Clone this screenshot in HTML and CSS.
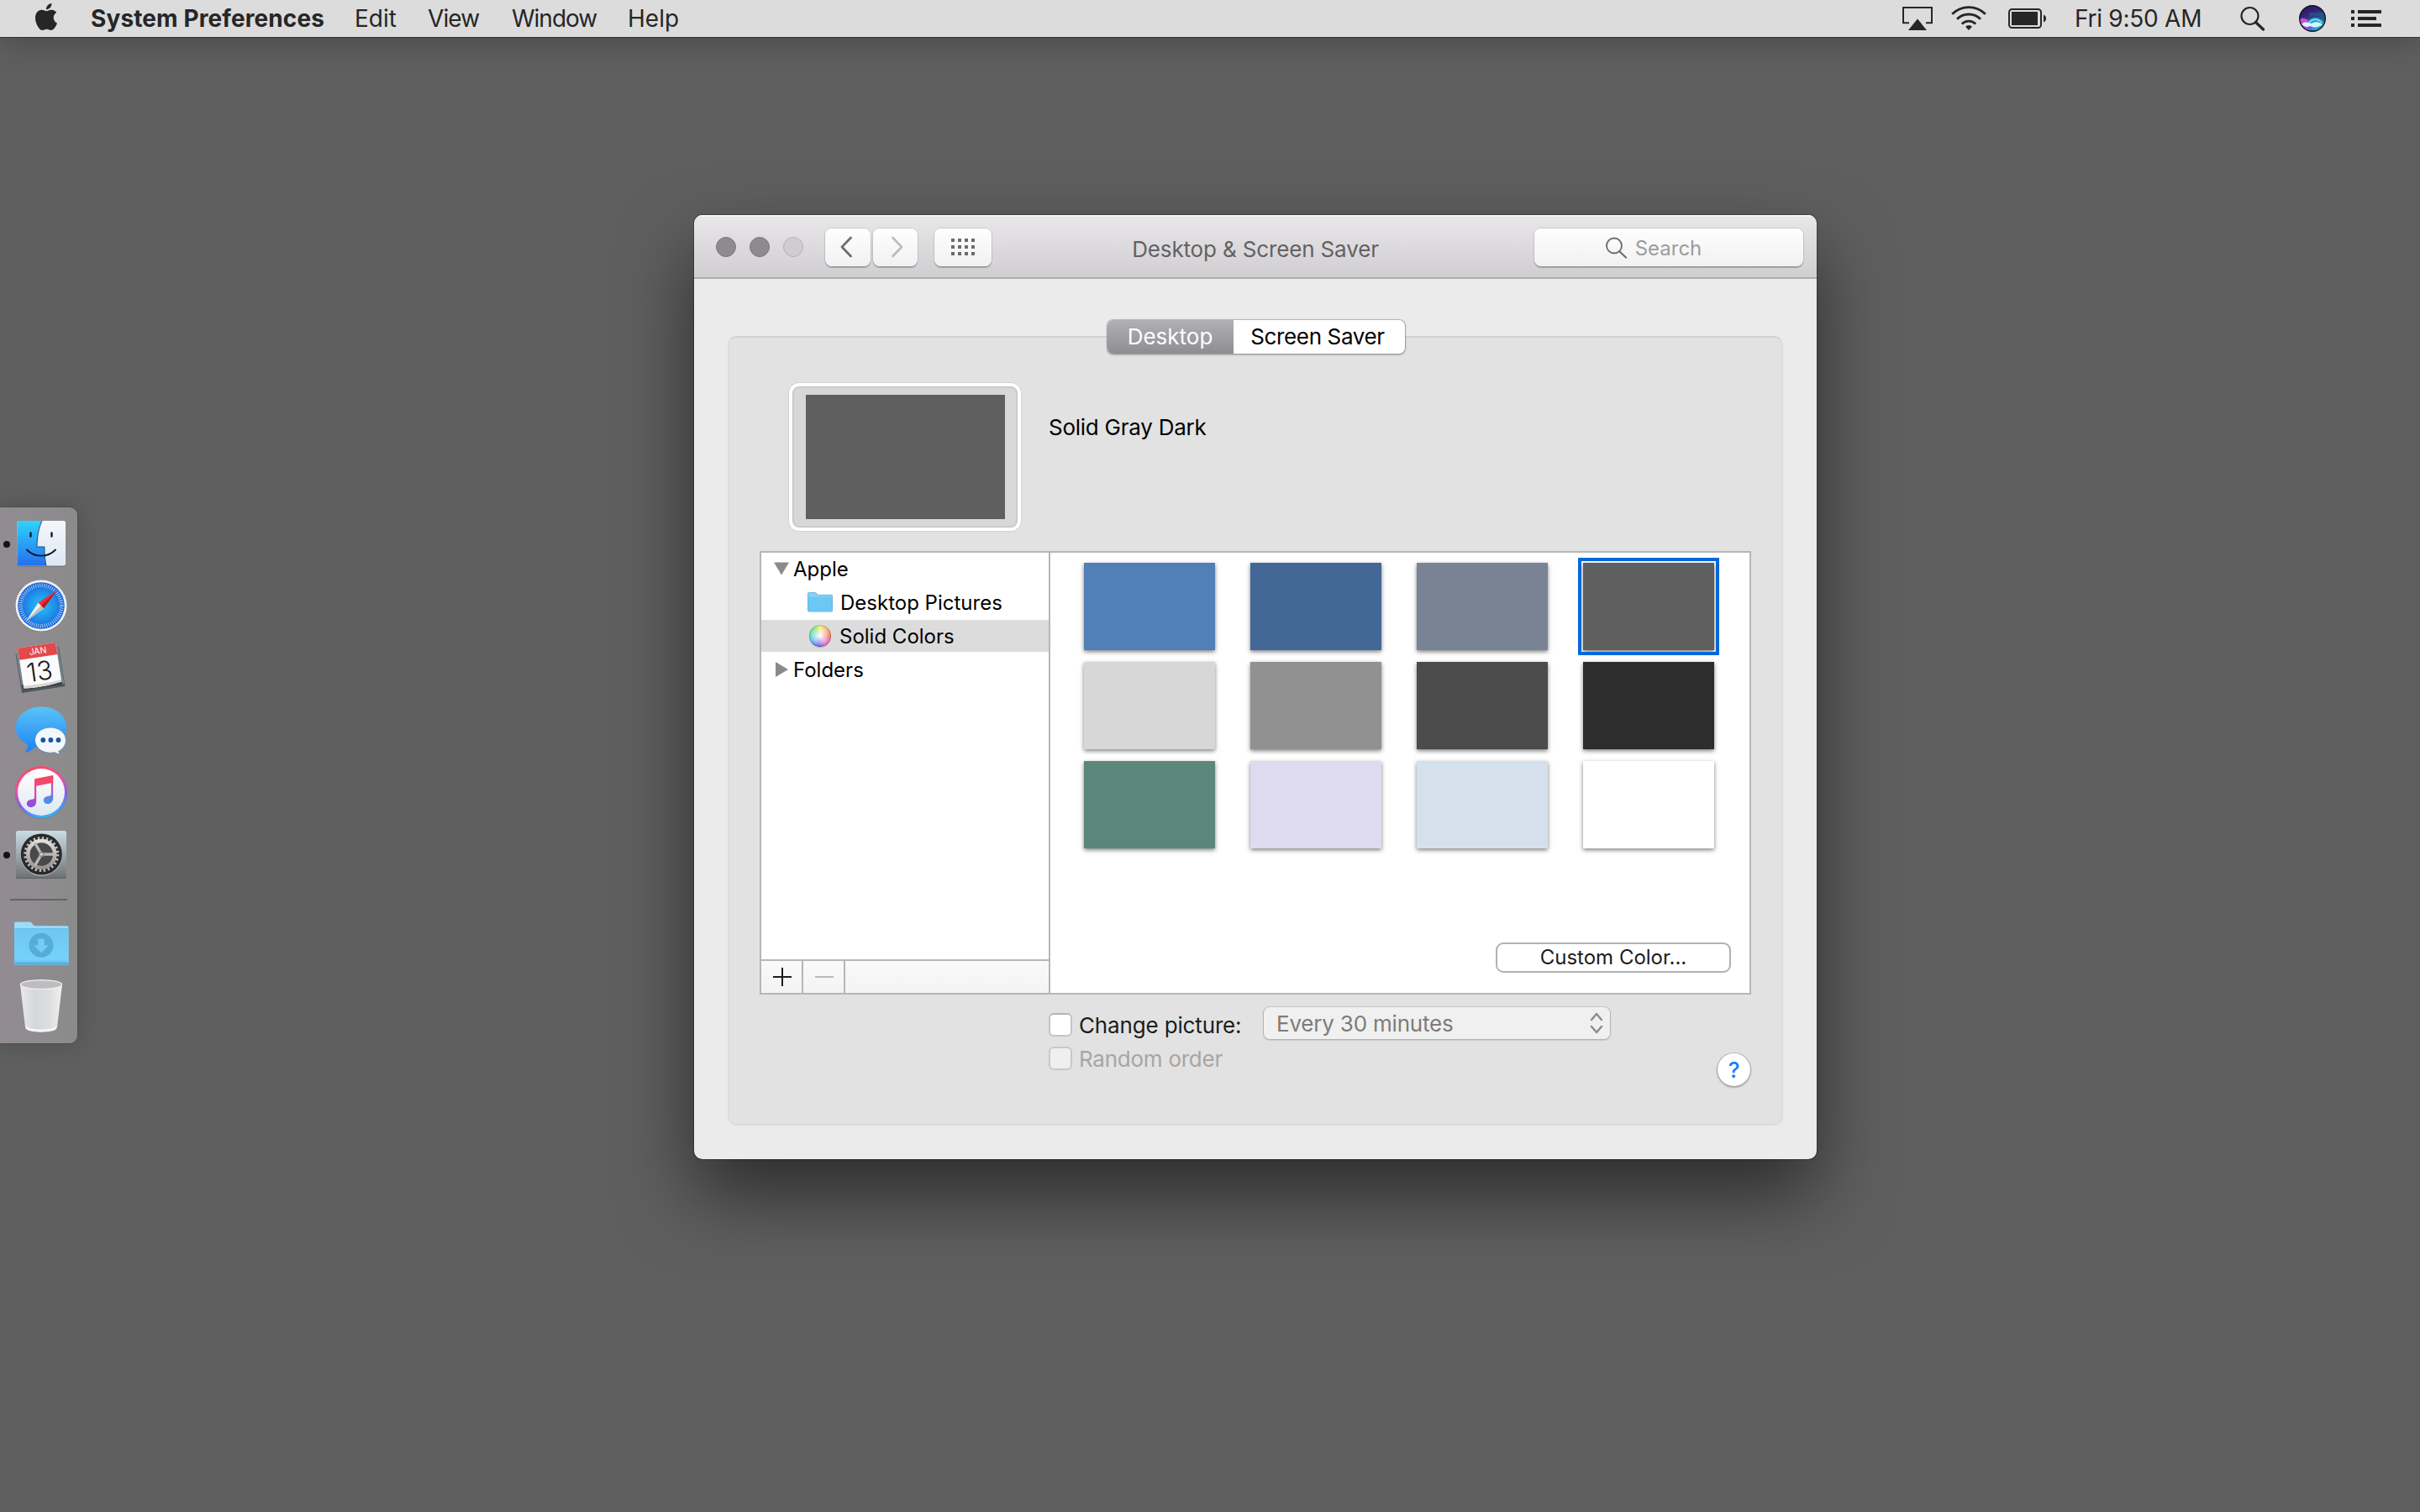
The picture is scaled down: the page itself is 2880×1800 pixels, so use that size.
FILE: index.html
```html
<!DOCTYPE html>
<html lang="en">
<head>
<meta charset="utf-8">
<title>Desktop &amp; Screen Saver</title>
<link rel="stylesheet" href="styles.css">
</head>
<body>
<header class="menubar">
  <svg class="apple" viewBox="0 0 24 24"><path d="M12.152 6.896c-.948 0-2.415-1.078-3.96-1.04-2.04.027-3.91 1.183-4.961 3.014-2.117 3.675-.546 9.103 1.519 12.09 1.013 1.454 2.208 3.09 3.792 3.039 1.52-.065 2.09-.987 3.935-.987 1.831 0 2.35.987 3.96.948 1.637-.026 2.676-1.48 3.676-2.948 1.156-1.688 1.636-3.325 1.662-3.415-.039-.013-3.182-1.221-3.22-4.857-.026-3.04 2.48-4.494 2.597-4.559-1.429-2.09-3.623-2.324-4.39-2.376-2-.156-3.675 1.09-4.61 1.09zM15.53 3.83c.843-1.012 1.4-2.427 1.245-3.83-1.207.052-2.662.805-3.532 1.818-.78.896-1.454 2.338-1.273 3.714 1.338.104 2.715-.688 3.559-1.701"/></svg>
  <nav class="menus">
    <span class="menu menu-app">System Preferences</span>
    <span class="menu menu-edit">Edit</span>
    <span class="menu menu-view">View</span>
    <span class="menu menu-window">Window</span>
    <span class="menu">Help</span>
  </nav>
  <div class="status">
    <svg class="airplay" width="36" height="28" viewBox="0 0 36 28"><path d="M8 19.200H1V1h34v18.200h-7" fill="none" stroke="#262626" stroke-width="2"/><path d="M18 14.500L29 28H7z" fill="#262626"/></svg>
    <svg class="wifi" width="42" height="30" viewBox="0 0 42 30"><g fill="none" stroke="#262626" stroke-width="2.800"><path d="M1.200 9.800a28 28 0 0 1 39.600 0"/><path d="M7 15.800a19.800 19.800 0 0 1 28 0"/><path d="M12.800 21.600a11.600 11.600 0 0 1 16.400 0"/></g><path d="M21 29l-4-4.200a5.600 5.600 0 0 1 8 0z" fill="#262626"/></svg>
    <svg class="battery" width="46" height="24" viewBox="0 0 46 24"><rect x="1" y="1" width="38" height="22" rx="3.500" fill="none" stroke="#262626" stroke-width="2"/><rect x="4" y="4" width="31" height="16" fill="#262626"/><path d="M42 7.500c4 1 4 8 0 9z" fill="#262626"/></svg>
    <span class="clock">Fri 9:50 AM</span>
    <svg class="spotlight" width="30" height="30" viewBox="0 0 30 30"><circle cx="11.500" cy="12" r="10" fill="none" stroke="#262626" stroke-width="2.200"/><path d="M18.500 19.500l9 8.500" stroke="#262626" stroke-width="3.200" stroke-linecap="round"/></svg>
    <svg class="siri" width="32" height="32" viewBox="0 0 32 32">
      <defs>
        <linearGradient id="siriSky" x1="0" y1="0" x2=".4" y2="1"><stop offset="0" stop-color="#2b1150"/><stop offset=".45" stop-color="#3a2580"/><stop offset="1" stop-color="#1d7fa8"/></linearGradient>
        <clipPath id="siriClip"><circle cx="16" cy="16" r="14.500"/></clipPath>
      </defs>
      <circle cx="16" cy="16" r="16" fill="#0c1524"/>
      <g clip-path="url(#siriClip)">
        <rect width="32" height="32" fill="url(#siriSky)"/>
        <path d="M12 15c7-5 15-1 20 6v-12h-20z" fill="#1b5f80" opacity=".7"/>
        <path d="M0 17c5-2.500 9-1 13 3l3 10H0z" fill="#c84fd6"/>
        <path d="M10 20c6-8 15-6 20 1l-4 9H12z" fill="#27a6c8" opacity=".9"/>
        <path d="M12 21c4-5 11-5 15 0" fill="none" stroke="#7fe6f5" stroke-width="1.300"/>
        <path d="M3 23c4-4 8-2 12-1 4-3 9-2 13 1-4 3-8 4-12 3-5 1-9 0-13-3z" fill="#d9f4ff"/>
        <path d="M9 27c2-2 5-2 7-1l-1 4h-4z" fill="#6a5be8"/>
      </g>
    </svg>
    <svg class="notif" width="36" height="20" viewBox="0 0 36 20" fill="#262626"><path d="M0 0h4v4H0zM8 0h28v4H8zM0 8h4v4H0zM8 8h22v4H8zM0 16h4v4H0zM8 16h28v4H8z"/></svg>
  </div>
</header>

<main class="desktop">
  <aside class="dock">
    <svg class="dock-icon" viewBox="0 0 92 74">
      <defs>
        <linearGradient id="finderL" x1="0" y1="0" x2="0" y2="1"><stop offset="0" stop-color="#2fd3fb"/><stop offset="1" stop-color="#2370ee"/></linearGradient>
        <linearGradient id="finderR" x1="0" y1="0" x2="0" y2="1"><stop offset="0" stop-color="#f6f7f9"/><stop offset="1" stop-color="#dce8f6"/></linearGradient>
      </defs>
      <circle cx="8" cy="38" r="4" fill="#151115"/>
      <rect x="20.500" y="10.500" width="57.500" height="54" rx="2" fill="#6d6d72"/>
      <rect x="20.500" y="10" width="57.500" height="53.500" rx="2" fill="url(#finderR)"/>
      <path d="M22.500 10H50c-4 9-5.800 18-6 31h9c-.3 8 .4 15 2 22.500H22.500a2 2 0 0 1-2-2V12a2 2 0 0 1 2-2z" fill="url(#finderL)"/>
      <path d="M50 10c-4 9-5.800 18-6 31h9c-.3 8 .4 15 2 22.500" fill="none" stroke="#1c4f86" stroke-width="1"/>
      <path d="M32 44.500c9 9.500 25 9.500 34 0" fill="none" stroke="#10182a" stroke-width="1.900" stroke-linecap="round"/>
      <path d="M36.500 24.500v4M61.500 24.500v4" stroke="#10182a" stroke-width="2.400" stroke-linecap="round"/>
    </svg>
    <svg class="dock-icon" viewBox="0 0 92 74">
      <defs><radialGradient id="safari"><stop offset="0" stop-color="#27c4f2"/><stop offset=".55" stop-color="#1f93ea"/><stop offset="1" stop-color="#1c62dd"/></radialGradient></defs>
      <circle cx="49" cy="37.800" r="30.500" fill="#707074"/>
      <circle cx="49" cy="37" r="30.500" fill="#f1f2f4"/>
      <circle cx="49" cy="37" r="27.800" fill="url(#safari)"/>
      <circle cx="49" cy="37" r="24.300" fill="none" stroke="#d5ecfb" stroke-width="4.600" stroke-dasharray=".9 1.645" opacity=".8"/>
      <path d="M67.500 19L45.500 33.500l6.500 7z" fill="#ee2f35"/><path d="M67.500 19L48.800 37l3.200 3.500z" fill="#bb1b22"/>
      <path d="M31 55.500L45.500 33.500l6.500 7z" fill="#f3f3f3"/><path d="M31 55.500L48.800 37l3.200 3.500z" fill="#b9bcc0"/>
    </svg>
    <svg class="dock-icon" viewBox="0 0 92 74">
      <path d="M18.500 20.500L26 67l51.500-8L70 12z" fill="#4f585d"/>
      <path d="M19 19.500L26.500 63.500l50-8L69 11z" fill="#77858c"/>
      <path d="M25.500 57.500l2 6.500 46.500-7-.8-5z" fill="#3d4446"/>
      <path d="M21 13.700L66 7l7.300 46.500c-14 4.500-30 7.500-45 8z" fill="#fbfbfb"/>
      <path d="M28.300 61.500c15-.5 31-3.500 45-8l-.4-2.500c-15 4-30 6.500-45 7.500z" fill="#d7d6cf"/>
      <path d="M21 13.700L66 7l2.200 14-45 6.800z" fill="#e4484a"/>
      <text class="cal-month" transform="translate(45.500 20.500) rotate(-8)">JAN</text>
      <text class="cal-day" transform="translate(48.500 52) rotate(-8)">13</text>
    </svg>
    <svg class="dock-icon" viewBox="0 0 92 74">
      <defs><linearGradient id="msg" x1="0" y1="0" x2="0" y2="1"><stop offset="0" stop-color="#5cc3f8"/><stop offset="1" stop-color="#1b83f5"/></linearGradient></defs>
      <path d="M49 9.200c16.700 0 30.300 11 30.300 24.700S65.700 58.500 49 58.500c-3 0-5.500-.2-8-.8-3 3.300-7 6-11.500 6 2-2.500 3.700-6 3.800-9C24.500 50.500 18.700 43 18.700 34 18.700 20.200 32.300 9.200 49 9.200z" fill="url(#msg)"/>
      <path d="M60 34c10.400 0 18.400 6.700 18.400 15.200 0 5.500-3.300 10.300-8.600 13 .2 1.400.8 2.600 1.700 3.600-2.600-.2-4.600-1-6.300-2.200-1.700.4-3.400.6-5.200.6-10.400 0-18.400-6.700-18.400-15.100S49.600 34 60 34z" fill="#f2f7fd" stroke="#3c7fc0" stroke-width=".6"/>
      <circle cx="51.300" cy="49" r="2.900" fill="#1755a0"/><circle cx="60.400" cy="49" r="2.900" fill="#1755a0"/><circle cx="69.500" cy="49" r="2.900" fill="#1755a0"/>
    </svg>
    <svg class="dock-icon" viewBox="0 0 92 74">
      <defs>
        <linearGradient id="ring" x1=".3" y1="0" x2=".6" y2="1"><stop offset="0" stop-color="#fb4a5c"/><stop offset=".35" stop-color="#f0509c"/><stop offset=".65" stop-color="#8a5cf5"/><stop offset="1" stop-color="#2cb9f5"/></linearGradient>
        <linearGradient id="noteL" gradientUnits="userSpaceOnUse" x1="0" y1="17" x2="0" y2="56"><stop offset="0" stop-color="#fb4350"/><stop offset=".35" stop-color="#f0488e"/><stop offset="1" stop-color="#7a52f4"/></linearGradient>
        <linearGradient id="noteR" gradientUnits="userSpaceOnUse" x1="0" y1="17" x2="0" y2="52"><stop offset="0" stop-color="#f84458"/><stop offset=".45" stop-color="#b05cc8"/><stop offset="1" stop-color="#2f9df4"/></linearGradient>
        <linearGradient id="face" x1="0" y1="0" x2="0" y2="1"><stop offset="0" stop-color="#fff"/><stop offset="1" stop-color="#dfe8f0"/></linearGradient>
      </defs>
      <circle cx="49" cy="37.500" r="31" fill="#5f6d86"/>
      <circle cx="49" cy="37" r="31" fill="url(#ring)"/>
      <circle cx="49" cy="37" r="28" fill="url(#face)"/>
      <path d="M63.200 17v27c0 4.500-3 7-6.500 7-3 0-4.900-1.800-4.900-4.300 0-3 2.500-4.700 5.500-5 2.800-.4 3.600-.8 3.600-3V20z" fill="url(#noteR)"/>
      <path d="M63.200 17v8.800l-20 4V48c0 4.500-3 7-6.500 7-3 0-4.900-1.800-4.900-4.300 0-3 2.500-4.700 5.500-5 2.800-.4 3.700-.8 3.700-3V22.300c0-.9.400-1.200 1.200-1.400z" fill="url(#noteL)"/>
    </svg>
    <svg class="dock-icon" viewBox="0 0 92 74">
      <defs>
        <linearGradient id="plate" x1="0" y1="0" x2="0" y2="1"><stop offset="0" stop-color="#cbdde4"/><stop offset=".5" stop-color="#9fa9ad"/><stop offset="1" stop-color="#6f7272"/></linearGradient>
        <linearGradient id="metal" x1="0" y1="0" x2="0" y2="1"><stop offset="0" stop-color="#e0dfdc"/><stop offset="1" stop-color="#96938e"/></linearGradient>
      </defs>
      <circle cx="8" cy="38" r="4" fill="#151115"/>
      <rect x="19" y="9.500" width="60" height="56.500" rx="2.500" fill="#5d5f60"/>
      <rect x="19" y="9" width="60" height="56" rx="2.500" fill="url(#plate)"/>
      <circle cx="49.300" cy="37.600" r="25" fill="#c2d2de"/>
      <circle cx="49.300" cy="37" r="24.600" fill="#2a2a2b"/>
      <circle cx="49.300" cy="37" r="14" fill="#48494a"/>
      <circle cx="49.300" cy="37" r="19.300" fill="none" stroke="#bdbbb8" stroke-width="3.600" stroke-dasharray="2.400 2.652"/>
      <circle cx="49.300" cy="37" r="16" fill="none" stroke="url(#metal)" stroke-width="4.600"/>
      <path d="M49.300 37H65M49.300 37L41.400 23.400M49.300 37L41.400 50.600" stroke="#b9b7b4" stroke-width="3.400"/>
      <circle cx="49.300" cy="37" r="3.200" fill="#8f8e8c"/><circle cx="49.300" cy="37" r="1.600" fill="#dddcda"/>
    </svg>
    <div class="dock-divider"></div>
    <svg class="dock-icon" viewBox="0 0 92 74">
      <defs><linearGradient id="folder" x1="0" y1="0" x2="0" y2="1"><stop offset="0" stop-color="#6fc8f3"/><stop offset=".85" stop-color="#76d0fa"/><stop offset="1" stop-color="#5cb4e4"/></linearGradient></defs>
      <path d="M17 62.500V13.500a2 2 0 0 1 2-2h16.500c3 0 3.200 4.800 6.500 4.800h37.500a2 2 0 0 1 2 2V62.500z" fill="#9adcfa"/>
      <path d="M17 20h64.500v41.500a1 1 0 0 1-1 1H18a1 1 0 0 1-1-1z" fill="url(#folder)"/>
      <path d="M17.500 19.500h63.500" stroke="#5bb5e0" stroke-width=".8"/><path d="M17 61h64.500" stroke="#4a9fcc" stroke-width="1"/>
      <circle cx="49" cy="39.300" r="14.500" fill="#54aed8"/>
      <path d="M45.300 31.500h7.400v7.800h5L49 48.500l-8.700-9.200h5z" fill="#74ccf6"/>
    </svg>
    <svg class="dock-icon" viewBox="0 0 92 74">
      <defs><linearGradient id="bin" x1="0" y1="0" x2="1" y2="0"><stop offset="0" stop-color="#e9eaec"/><stop offset=".35" stop-color="#d6d7d9"/><stop offset=".7" stop-color="#dddee0"/><stop offset="1" stop-color="#f0f0f1"/></linearGradient></defs>
      <path d="M24 12l6 51c1 7 37 7 38 0l6-51z" fill="url(#bin)"/>
      <path d="M30.300 61c3 6 34.500 6 37.400 0l-.7 3.500c-2 5.500-34 5.500-36 0z" fill="#f6f6f7"/>
      <ellipse cx="49" cy="12" rx="24.600" ry="5.400" fill="#bdbcbe" stroke="#f0f0f1" stroke-width="1.200"/>
    </svg>
  </aside>

  <section class="window">
    <div class="titlebar">
      <div class="controls">
        <i class="light"></i><i class="light"></i><i class="light light-off"></i>
        <button class="tool back"><svg width="16" height="32" viewBox="0 0 16 32"><path d="M13.500 5L3 16l10.500 11" fill="none" stroke="#6e6e6e" stroke-width="2.800" stroke-linecap="round" stroke-linejoin="round"/></svg></button>
        <button class="tool forward"><svg width="16" height="32" viewBox="0 0 16 32"><path d="M2.500 5L13 16 2.500 27" fill="none" stroke="#bdbdbd" stroke-width="2.800" stroke-linecap="round" stroke-linejoin="round"/></svg></button>
        <button class="tool all"><svg width="28" height="20" viewBox="0 0 28 20" fill="#6b6b6b"><path d="M0 0h4v4H0zM8 0h4v4H8zM16 0h4v4h-4zM24 0h4v4h-4zM0 8h4v4H0zM8 8h4v4H8zM16 8h4v4h-4zM24 8h4v4h-4zM0 16h4v4H0zM8 16h4v4H8zM16 16h4v4h-4zM24 16h4v4h-4z"/></svg></button>
      </div>
      <h1 class="title">Desktop &amp; Screen Saver</h1>
      <div class="search">
        <svg width="26" height="26" viewBox="0 0 26 26"><circle cx="10" cy="10.500" r="9" fill="none" stroke="#6d6d6d" stroke-width="1.900"/><path d="M16.500 17.500l7.500 7" stroke="#6d6d6d" stroke-width="2.200" stroke-linecap="round"/></svg>
        <span>Search</span>
      </div>
    </div>

    <div class="content">
      <div class="tabs"><span class="tab tab-on">Desktop</span><span class="tab tab-saver">Screen Saver</span></div>
      <div class="panel">
        <div class="current">
          <div class="well"><div class="well-picture"></div></div>
          <p class="current-name">Solid Gray Dark</p>
        </div>

        <div class="browser">
          <div class="sources">
            <ul class="tree">
              <li class="row"><svg class="arrow" width="18" height="18" viewBox="0 0 18 18"><path d="M0 1.500h18L9 16.500z" fill="#8a8a8a"/></svg><span class="row-label">Apple</span></li>
              <li class="row row-child"><svg class="row-icon" width="30" height="26" viewBox="0 0 30 26"><path d="M.5 23V2.500a1 1 0 0 1 1-1h8c1.500 0 1.500 2.800 3 2.800h16a1 1 0 0 1 1 1V23a1 1 0 0 1-1 1h-27a1 1 0 0 1-1-1z" fill="#86d1f5" stroke="#55a9d6" stroke-width=".8"/><path d="M1 6.500h28V23H1z" fill="#6bc7f4"/></svg><span class="row-label">Desktop Pictures</span></li>
              <li class="row row-child row-selected"><i class="row-icon wheel"></i><span class="row-label">Solid Colors</span></li>
              <li class="row"><svg class="arrow" width="18" height="18" viewBox="0 0 18 18"><path d="M2 0l15 9-15 9z" fill="#8a8a8a"/></svg><span class="row-label">Folders</span></li>
            </ul>
            <div class="source-actions">
              <span class="action"><svg width="22" height="22" viewBox="0 0 22 22"><path d="M11 0v22M0 11h22" stroke="#1c1c1c" stroke-width="2"/></svg></span>
              <span class="action"><svg width="22" height="22" viewBox="0 0 22 22"><path d="M0 11h22" stroke="#b9b9b9" stroke-width="2"/></svg></span>
            </div>
          </div>
          <div class="colors">
            <div class="swatches">
              <i class="swatch blue"></i><i class="swatch deep-blue"></i><i class="swatch slate"></i><i class="swatch gray-dark swatch-selected"></i>
              <i class="swatch gray-light"></i><i class="swatch gray"></i><i class="swatch charcoal"></i><i class="swatch near-black"></i>
              <i class="swatch green"></i><i class="swatch lavender"></i><i class="swatch ice"></i><i class="swatch white"></i>
            </div>
            <button class="custom">Custom Color...</button>
          </div>
        </div>

        <div class="options">
          <div class="option-list">
            <div class="option">
              <i class="check"></i><span class="option-label">Change picture:</span>
              <div class="popup"><span>Every 30 minutes</span><svg width="16" height="26" viewBox="0 0 16 26"><path d="M2 9l6-7 6 7M2 17l6 7 6-7" fill="none" stroke="#8a8a8a" stroke-width="2.400" stroke-linecap="round" stroke-linejoin="round"/></svg></div>
            </div>
            <div class="option option-off"><i class="check"></i><span class="option-label">Random order</span></div>
          </div>
          <button class="help">?</button>
        </div>
      </div>
    </div>
  </section>
</main>
</body>
</html>
```
FILE: styles.css
```css
* { box-sizing: border-box; margin: 0; padding: 0; }
body {
  width: 2880px;
  height: 1800px;
  overflow: hidden;
  background: #5f5f5f;
  font-family: Inter, "Liberation Sans", sans-serif;
  font-size: 26px;
  color: #000;
}
svg { display: block; flex: none; }
button { font: inherit; border: 0; }

/* Menu bar */
.menubar {
  position: relative;
  z-index: 2;
  display: flex;
  align-items: center;
  height: 44px;
  padding: 0 46px 0 39px;
  background: #dcdcdc;
  box-shadow: 0 1px 0 rgba(0, 0, 0, .35), 0 0 40px rgba(0, 0, 0, .32);
  color: #262626;
  font-size: 28px;
  line-height: 44px;
  white-space: nowrap;
}
.apple { width: 32px; height: 32px; margin: -4px 37px 0 0; fill: #262626; }
.menus { display: flex; }
.menu-app { width: 314px; font-weight: 700; letter-spacing: .1px; }
.menu-edit { width: 87px; }
.menu-view { width: 100px; letter-spacing: -.9px; }
.menu-window { width: 138px; letter-spacing: -1px; }
.status { display: flex; align-items: center; margin-left: auto; }
.wifi { margin: -1px 26px 0 22px; }
.clock { width: 197px; margin-left: 33px; letter-spacing: -.25px; }
.spotlight { width: 30px; margin-right: 40px; }
.siri { margin-right: 30px; }

/* Dock */
.desktop { position: relative; height: 1756px; }
.dock {
  position: absolute;
  left: 0;
  top: 560px;
  width: 92px;
  height: 638px;
  padding-top: 6px;
  border-radius: 0 9px 9px 0;
  background: linear-gradient(90deg, #928c92, #8b8b8b);
  box-shadow: 0 0 0 1px rgba(0, 0, 0, .12), 0 0 30px rgba(0, 0, 0, .18);
}
.dock-icon { width: 92px; height: 74px; }
.dock-divider { width: 68px; height: 2px; margin: 16px 0 14px 12px; background: #656367; }
.cal-month { font-size: 10.500px; fill: #fff; text-anchor: middle; }
.cal-day { font-size: 31px; font-weight: 300; fill: #1b1b1b; text-anchor: middle; }

/* Window */
.window {
  position: absolute;
  left: 826px;
  top: 212px;
  width: 1336px;
  height: 1124px;
  border-radius: 10px;
  overflow: hidden;
  background: #ebebeb;
  box-shadow: 0 0 0 1px rgba(0, 0, 0, .3), 0 42px 90px rgba(0, 0, 0, .54);
}
.titlebar {
  display: grid;
  grid-template-columns: 1fr auto 1fr;
  align-items: center;
  height: 76px;
  padding: 2px 16px 0;
  border-bottom: 2px solid #afadb0;
  background: linear-gradient(#e9e7ea, #d1ced2);
  box-shadow: inset 0 2px 0 #f5f4f6;
}
.controls { display: flex; align-items: center; padding-left: 10px; }
.light { width: 24px; height: 24px; margin-right: 16px; border: 1.500px solid #79787c; border-radius: 50%; background: #8d8b90; }
.light-off { margin-right: 26px; border-color: #b4b2b5; background: #cfcdcf; }
.tool, .search {
  display: flex;
  align-items: center;
  justify-content: center;
  height: 45px;
  border-radius: 8px;
  background: linear-gradient(#fefefe, #f1f1f1);
  box-shadow: 0 0 0 1px rgba(0, 0, 0, .1), 0 2px 1px rgba(0, 0, 0, .22);
}
.back { width: 54px; margin-right: 3px; padding-right: 4px; }
.forward { width: 53px; margin-right: 20px; padding-left: 4px; }
.all { width: 68px; }
.title { padding-top: 5px; font-size: 26px; font-weight: 400; color: #626262; letter-spacing: -.15px; }
.search { justify-self: end; gap: 9px; width: 320px; padding-right: 36px; color: #9c9c9c; font-size: 24px; }
.search svg { margin-top: 2px; }
.search span { padding-top: 2px; }
.content { display: flex; flex-direction: column; align-items: center; padding: 49px 40px 0; }
.tabs {
  display: flex;
  z-index: 1;
  height: 40px;
  margin: 0 0 -21px 1px;
  border-radius: 7px;
  background: #fff;
  box-shadow: 0 0 0 1px rgba(0, 0, 0, .18), 0 1px 2px 1px rgba(0, 0, 0, .18);
  line-height: 40px;
}
.tab { width: 204px; text-align: center; }
.tab-on { width: 150px; border-radius: 7px 0 0 7px; background: linear-gradient(#b1b0b5, #8e8d92); color: #fff; }
.tab-saver { padding-right: 3px; letter-spacing: -.35px; }
.panel {
  width: 1256px;
  height: 940px;
  padding: 54px 36px 0;
  border: 2px solid #dcdcdc;
  border-top-color: #d3d3d3;
  border-radius: 10px;
  background: #e2e2e2;
}

/* Current picture */
.current { display: flex; margin-left: 35px; }
.well {
  width: 276px;
  height: 176px;
  padding: 10px 15px 10px 16px;
  border: 4px solid #fff;
  border-radius: 12px;
  background: #d8d8d8;
  box-shadow: 0 0 0 1px #d3d3d3, inset 0 0 2px 1px #bcbcbc;
}
.well-picture { height: 148px; background: #5f5f5f; }
.current-name { margin: 35px 0 0 33px; line-height: 36px; letter-spacing: -.25px; }

/* Sources and colours */
.browser { display: grid; grid-template-columns: 344px 1fr; height: 528px; margin-top: 24px; border: 2px solid #b6b6b6; background: #fff; }
.sources { display: flex; flex-direction: column; justify-content: space-between; border-right: 2px solid #b6b6b6; font-size: 24px; }
.tree { display: flex; flex-direction: column; gap: 2px; list-style: none; }
.row { display: flex; align-items: center; height: 38px; padding-left: 15px; line-height: 36px; }
.row-label { padding-top: 2px; }
.arrow { margin-right: 5px; }
.row-child { padding-left: 55px; }
.row-icon { margin-right: 9px; }
.row-selected { background: #dcdcdc; }
.wheel {
  width: 26px;
  height: 26px;
  margin: 0 10px 0 2px;
  border-radius: 50%;
  background: radial-gradient(#fff, rgba(255, 255, 255, .35) 50%, rgba(255, 255, 255, 0) 72%), conic-gradient(#f2e66a, #f06a5a 25%, #e45cc8 40%, #5a5ae0 52%, #50b8f0 68%, #4fe0b4 80%, #7be06a 90%, #f2e66a);
  box-shadow: inset 0 0 0 1px rgba(0, 0, 0, .2), 0 1px 1px rgba(0, 0, 0, .2);
}
.source-actions { display: flex; height: 40px; border-top: 2px solid #b6b6b6; background: linear-gradient(#fafafa, #f3f3f3); }
.action { display: flex; align-items: center; justify-content: center; width: 50px; padding-left: 2px; border-right: 2px solid #b6b6b6; }
.colors { display: flex; flex-direction: column; justify-content: space-between; padding: 12px 22px 24px 40px; }
.swatches { display: grid; grid-template-columns: repeat(4, 156px); grid-auto-rows: 104px; gap: 14px 42px; }
.swatch { box-shadow: 0 2px 5px rgba(0, 0, 0, .5); }
.swatch-selected { outline: 4px solid #0069d9; outline-offset: 2px; }
.blue { background: #517fb6; }
.deep-blue { background: #436897; }
.slate { background: #788494; }
.gray-dark { background: #5f5f5f; }
.gray-light { background: #d7d7d7; }
.gray { background: #919191; }
.charcoal { background: #4b4b4b; }
.near-black { background: #2d2d2d; }
.green { background: #5a877a; }
.lavender { background: #dedaf0; }
.ice { background: #d4e1ec; }
.white { background: #fff; }
.custom { align-self: flex-end; width: 280px; height: 36px; border: 2px solid #b1b1b1; border-radius: 9px; background: #fff; color: #1c1c1c; font-size: 24px; line-height: 32px; }

/* Options */
.options { display: flex; justify-content: space-between; padding: 14px 1px 0 344px; }
.option { display: flex; align-items: center; height: 40px; }
.check { width: 28px; height: 28px; margin: 4px 8px 0 0; border: 2px solid #c4c4c4; border-top-color: #b3b3b3; border-radius: 6px; background: #fff; }
.option-label { width: 220px; padding-top: 5px; color: #1c1c1c; letter-spacing: -.15px; white-space: nowrap; }
.option-off { height: 42px; }
.option-off .check { margin-top: 2px; border-color: #c8c8c8; background: #efefef; }
.option-off .option-label { padding-top: 3px; color: #a6a6a6; letter-spacing: -.25px; }
.popup {
  display: flex;
  align-items: center;
  justify-content: space-between;
  width: 412px;
  height: 38px;
  padding: 0 8px 0 15px;
  border-radius: 7px;
  background: #f0f0f0;
  box-shadow: 0 0 0 1px rgba(0, 0, 0, .12), 0 1px 1px 1px rgba(0, 0, 0, .1);
  color: #7c7c7c;
  letter-spacing: -.2px;
}
.help { width: 39px; height: 39px; margin-top: 56px; border-radius: 50%; background: #fff; box-shadow: 0 0 0 1px rgba(0, 0, 0, .12), 0 1px 2px 1px rgba(0, 0, 0, .22); color: #147efb; font-weight: 500; line-height: 39px; }
```
